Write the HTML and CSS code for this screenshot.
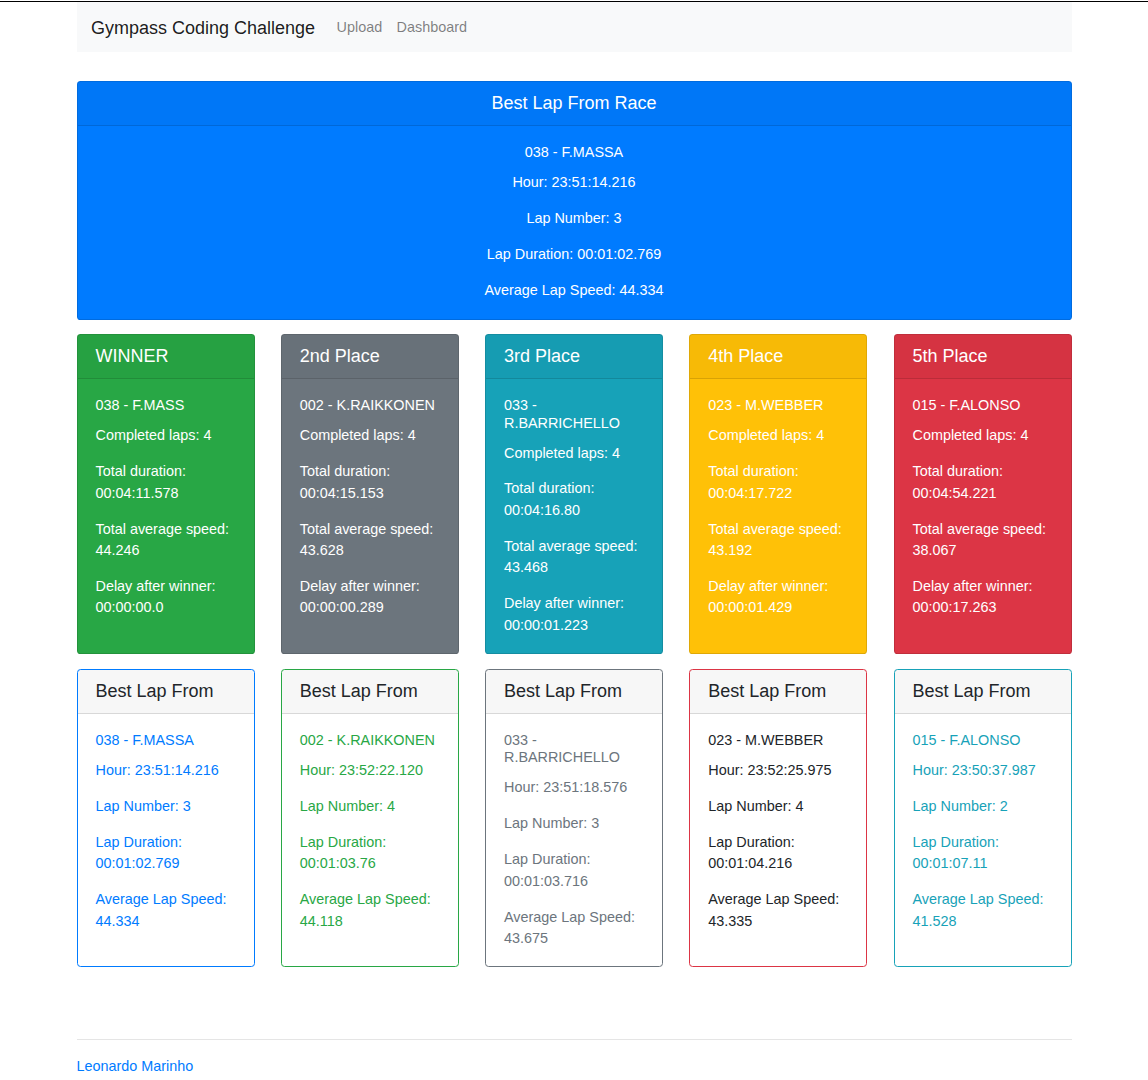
FILE: index.html
```html
<!DOCTYPE html>
<html lang="en">
<head>
<meta charset="utf-8">
<title>Gympass Coding Challenge</title>
<link rel="stylesheet" href="styles.css">
</head>
<body>
<div class="topline"></div>
<div class="container">
  <nav class="navbar">
    <a class="brand" href="#">Gympass Coding Challenge</a>
    <a class="nav-link" href="#">Upload</a>
    <a class="nav-link" href="#">Dashboard</a>
  </nav>

  <main class="main">
    <section class="card card-fill bg-primary race-card">
      <div class="card-header center"><h5 class="header-title">Best Lap From Race</h5></div>
      <div class="card-body center">
        <div class="card-title">038 - F.MASSA</div>
        <p class="card-text">Hour: 23:51:14.216</p>
        <p class="card-text">Lap Number: 3</p>
        <p class="card-text">Lap Duration: 00:01:02.769</p>
        <p class="card-text">Average Lap Speed: 44.334</p>
      </div>
    </section>

    <div class="card-row">
      <section class="card card-fill bg-success">
        <div class="card-header"><h5 class="header-title">WINNER</h5></div>
        <div class="card-body">
          <div class="card-title">038 - F.MASS</div>
          <p class="card-text">Completed laps: 4</p>
          <p class="card-text">Total duration: 00:04:11.578</p>
          <p class="card-text">Total average speed: 44.246</p>
          <p class="card-text">Delay after winner: 00:00:00.0</p>
        </div>
      </section>
      <section class="card card-fill bg-secondary">
        <div class="card-header"><h5 class="header-title">2nd Place</h5></div>
        <div class="card-body">
          <div class="card-title">002 - K.RAIKKONEN</div>
          <p class="card-text">Completed laps: 4</p>
          <p class="card-text">Total duration: 00:04:15.153</p>
          <p class="card-text">Total average speed: 43.628</p>
          <p class="card-text">Delay after winner: 00:00:00.289</p>
        </div>
      </section>
      <section class="card card-fill bg-info">
        <div class="card-header"><h5 class="header-title">3rd Place</h5></div>
        <div class="card-body">
          <div class="card-title">033 - R.BARRICHELLO</div>
          <p class="card-text">Completed laps: 4</p>
          <p class="card-text">Total duration: 00:04:16.80</p>
          <p class="card-text">Total average speed: 43.468</p>
          <p class="card-text">Delay after winner: 00:00:01.223</p>
        </div>
      </section>
      <section class="card card-fill bg-warning">
        <div class="card-header"><h5 class="header-title">4th Place</h5></div>
        <div class="card-body">
          <div class="card-title">023 - M.WEBBER</div>
          <p class="card-text">Completed laps: 4</p>
          <p class="card-text">Total duration: 00:04:17.722</p>
          <p class="card-text">Total average speed: 43.192</p>
          <p class="card-text">Delay after winner: 00:00:01.429</p>
        </div>
      </section>
      <section class="card card-fill bg-danger">
        <div class="card-header"><h5 class="header-title">5th Place</h5></div>
        <div class="card-body">
          <div class="card-title">015 - F.ALONSO</div>
          <p class="card-text">Completed laps: 4</p>
          <p class="card-text">Total duration: 00:04:54.221</p>
          <p class="card-text">Total average speed: 38.067</p>
          <p class="card-text">Delay after winner: 00:00:17.263</p>
        </div>
      </section>
    </div>

    <div class="card-row">
      <section class="card border-primary text-primary">
        <div class="card-header"><h5 class="header-title dark">Best Lap From</h5></div>
        <div class="card-body">
          <div class="card-title">038 - F.MASSA</div>
          <p class="card-text">Hour: 23:51:14.216</p>
          <p class="card-text">Lap Number: 3</p>
          <p class="card-text">Lap Duration: 00:01:02.769</p>
          <p class="card-text">Average Lap Speed: 44.334</p>
        </div>
      </section>
      <section class="card border-success text-success">
        <div class="card-header"><h5 class="header-title dark">Best Lap From</h5></div>
        <div class="card-body">
          <div class="card-title">002 - K.RAIKKONEN</div>
          <p class="card-text">Hour: 23:52:22.120</p>
          <p class="card-text">Lap Number: 4</p>
          <p class="card-text">Lap Duration: 00:01:03.76</p>
          <p class="card-text">Average Lap Speed: 44.118</p>
        </div>
      </section>
      <section class="card border-secondary text-secondary">
        <div class="card-header"><h5 class="header-title dark">Best Lap From</h5></div>
        <div class="card-body">
          <div class="card-title">033 - R.BARRICHELLO</div>
          <p class="card-text">Hour: 23:51:18.576</p>
          <p class="card-text">Lap Number: 3</p>
          <p class="card-text">Lap Duration: 00:01:03.716</p>
          <p class="card-text">Average Lap Speed: 43.675</p>
        </div>
      </section>
      <section class="card border-danger text-dark">
        <div class="card-header"><h5 class="header-title dark">Best Lap From</h5></div>
        <div class="card-body">
          <div class="card-title">023 - M.WEBBER</div>
          <p class="card-text">Hour: 23:52:25.975</p>
          <p class="card-text">Lap Number: 4</p>
          <p class="card-text">Lap Duration: 00:01:04.216</p>
          <p class="card-text">Average Lap Speed: 43.335</p>
        </div>
      </section>
      <section class="card border-info text-info">
        <div class="card-header"><h5 class="header-title dark">Best Lap From</h5></div>
        <div class="card-body">
          <div class="card-title">015 - F.ALONSO</div>
          <p class="card-text">Hour: 23:50:37.987</p>
          <p class="card-text">Lap Number: 2</p>
          <p class="card-text">Lap Duration: 00:01:07.11</p>
          <p class="card-text">Average Lap Speed: 41.528</p>
        </div>
      </section>
    </div>
  </main>

  <footer class="footer">
    <hr class="rule">
    <a class="author" href="#">Leonardo Marinho</a>
  </footer>
</div>
</body>
</html>
```

FILE: styles.css
```css
* { box-sizing: border-box; }

html, body {
  margin: 0;
  padding: 0;
}

body {
  font-family: "Liberation Sans", Arial, sans-serif;
  font-size: 14.4px;
  line-height: 21.5px;
  color: #212529;
  background: #fff;
}

a { text-decoration: none; }

.topline {
  margin-top: 1px;
  border-top: 1px solid #000;
}

.container {
  width: 995px;
  margin: 0 auto;
}

/* Navbar */
.navbar {
  display: flex;
  align-items: center;
  background: #f8f9fa;
  padding: 8.2px 14.4px 6.2px;
  height: 50px;
}

.brand {
  font-size: 18px;
  line-height: 27px;
  padding: 4.5px 0;
  margin-right: 14.4px;
  color: rgba(0, 0, 0, 0.9);
}

.nav-link {
  padding: 7.2px;
  color: rgba(0, 0, 0, 0.5);
  line-height: 21.6px;
}

/* Main */
.main {
  padding-top: 29px;
}

.card {
  display: flex;
  flex-direction: column;
  border: 1px solid rgba(0, 0, 0, 0.125);
  border-radius: 3.6px;
  background: #fff;
  overflow: hidden;
}

.card-header {
  padding: 10.8px 18px;
  background: rgba(0, 0, 0, 0.03);
  border-bottom: 1px solid rgba(0, 0, 0, 0.125);
}

.header-title {
  margin: 0;
  font-size: 18px;
  font-weight: 400;
  line-height: 21.6px;
}

.header-title.dark { color: #212529; }

.card-body {
  flex: 1 1 auto;
  padding: 18px 18px 16.5px;
}

.card-title {
  font-size: 14.4px;
  line-height: 1.2;
  margin-bottom: 10.8px;
}

.card-text {
  margin: 0 0 14.4px;
}

.card-text:last-child { margin-bottom: 0; }

.center { text-align: center; }

.race-card { margin-bottom: 13.6px; }
.race-card .card-body { padding-bottom: 18px; }

.card-row {
  display: grid;
  grid-template-columns: repeat(5, 1fr);
  gap: 26.25px;
  margin-bottom: 15.2px;
}

/* Filled variants */
.card-fill { color: #fff; }
.bg-primary { background: #007bff; }
.bg-success { background: #28a745; }
.bg-secondary { background: #6c757d; }
.bg-info { background: #17a2b8; }
.bg-warning { background: #ffc107; }
.bg-danger { background: #dc3545; }

/* Outline variants */
.border-primary { border-color: #007bff; }
.border-success { border-color: #28a745; }
.border-secondary { border-color: #6c757d; }
.border-danger { border-color: #dc3545; }
.border-info { border-color: #17a2b8; }

.text-primary { color: #007bff; }
.text-success { color: #28a745; }
.text-secondary { color: #6c757d; }
.text-dark { color: #212529; }
.text-info { color: #17a2b8; }

/* Footer */
.footer {
  padding-top: 57px;
}

.rule {
  margin: 0 0 15.4px;
  border: 0;
  border-top: 1px solid rgba(0, 0, 0, 0.1);
}

.author {
  color: #007bff;
  line-height: 21.6px;
}
```
